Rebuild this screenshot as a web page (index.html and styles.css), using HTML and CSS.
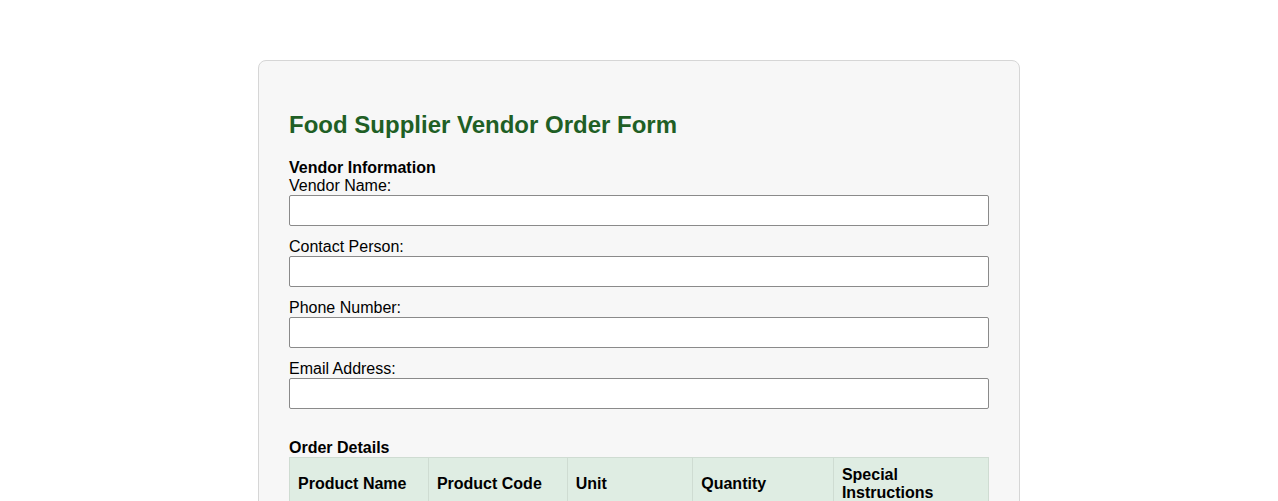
FILE: index.html
```html
<!DOCTYPE html>
<html>
<head>
<meta charset="utf-8">
<link rel="stylesheet" href="styles.css">
</head>
<body>
<div class="container">
  <h2 class="title">Food Supplier Vendor Order Form</h2>
  <div class="section">
    <div class="section-title">Vendor Information</div>
    <label class="label">Vendor Name:</label>
    <input class="field" type="text">
    <label class="label">Contact Person:</label>
    <input class="field" type="text">
    <label class="label">Phone Number:</label>
    <input class="field" type="text">
    <label class="label">Email Address:</label>
    <input class="field" type="text">
  </div>
  <div class="section section-order">
    <div class="section-title">Order Details</div>
    <table class="order-table">
      <thead>
        <tr>
          <th class="c1">Product Name</th>
          <th class="c2">Product Code</th>
          <th class="c3">Unit</th>
          <th class="c4">Quantity</th>
          <th class="c5">Special Instructions</th>
        </tr>
      </thead>
      <tbody>
        <tr><td></td><td></td><td></td><td></td><td></td></tr>
      </tbody>
    </table>
  </div>
</div>
</body>
</html>
```
FILE: styles.css
```css
html, body {
  margin: 0;
  padding: 0;
  background: #ffffff;
  font-family: "Liberation Sans", Arial, sans-serif;
  font-size: 16px;
  color: #000;
}
.container {
  width: 700px;
  margin: 60px auto 40px;
  padding: 30px;
  background: #f7f7f7;
  border: 1px solid #d6d6d6;
  border-radius: 8px;
}
.title {
  font-size: 24px;
  font-weight: bold;
  color: #1f5f25;
  margin: 20px 0 20px;
}
.section-title {
  font-weight: bold;
  line-height: 18px;
}
.label {
  display: block;
  line-height: 18px;
}
.field {
  display: block;
  box-sizing: border-box;
  width: 100%;
  height: 31px;
  margin: 0 0 12px;
  padding: 5px;
  border: 1px solid #8a8a8a;
  border-radius: 2px;
  background: #fff;
  font-family: inherit;
  font-size: 14px;
}
.section-order {
  margin-top: 30px;
}
.order-table {
  width: 100%;
  border-collapse: collapse;
}
.order-table th,
.order-table td {
  border: 1px solid #cfdcd2;
  padding: 8px;
  text-align: left;
  vertical-align: middle;
}
.order-table th {
  background: #dfede3;
  font-weight: bold;
  line-height: 18px;
}
.order-table td {
  height: 20px;
  background: #fff;
}
.c1 { width: 139px; }
.c2 { width: 139px; }
.c3 { width: 130px; }
.c4 { width: 140px; }
.c5 { width: 151px; }
```
